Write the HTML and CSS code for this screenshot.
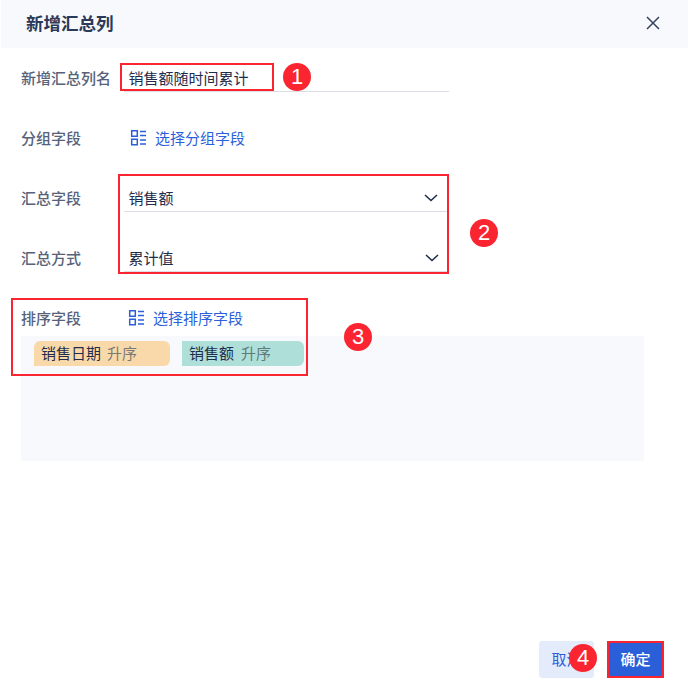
FILE: index.html
```html
<!DOCTYPE html>
<html lang="zh-CN">
<head>
    <meta charset="UTF-8">
    <title>新增汇总列</title>
    <link rel="stylesheet" href="styles.css">
</head>
<body>
    <div class="dialog">
        <div class="dialog-header">
            <h1 class="dialog-title">新增汇总列</h1>
            <svg class="close-icon" width="14" height="14" viewBox="0 0 14 14">
                <path d="M1 1L13 13M13 1L1 13" />
            </svg>
        </div>

        <div class="dialog-body">
            <div class="form-row">
                <label class="form-label">新增汇总列名</label>
                <div class="field">销售额随时间累计</div>
            </div>

            <div class="form-row">
                <label class="form-label">分组字段</label>
                <a class="pick-link">
                    <svg class="pick-icon" width="17" height="17" viewBox="0 0 17 17">
                        <path d="M1.7 1.7H7.3V7.3H1.7ZM1.7 10.2H7.3V15.8H1.7ZM10 2.5H16M10 6.5H16M10 11H16M10 15H16" />
                    </svg>
                    选择分组字段
                </a>
            </div>

            <div class="form-row">
                <label class="form-label">汇总字段</label>
                <div class="field field-select">
                    销售额
                    <svg class="arrow" width="14" height="8" viewBox="0 0 14 8">
                        <path d="M1 1L7 6.5L13 1" />
                    </svg>
                </div>
            </div>

            <div class="form-row">
                <label class="form-label">汇总方式</label>
                <div class="field field-select field-select-last">
                    累计值
                    <svg class="arrow" width="14" height="8" viewBox="0 0 14 8">
                        <path d="M1 1L7 6.5L13 1" />
                    </svg>
                </div>
            </div>

            <div class="form-row form-row-sort">
                <label class="form-label">排序字段</label>
                <a class="pick-link pick-link-sort">
                    <svg class="pick-icon" width="17" height="17" viewBox="0 0 17 17">
                        <path d="M1.7 1.7H7.3V7.3H1.7ZM1.7 10.2H7.3V15.8H1.7ZM10 2.5H16M10 6.5H16M10 11H16M10 15H16" />
                    </svg>
                    选择排序字段
                </a>
            </div>

            <div class="sort-panel">
                <span class="tag tag-orange">销售日期<em>升序</em></span>
                <span class="tag tag-green">销售额<em>升序</em></span>
            </div>
        </div>

        <div class="dialog-footer">
            <button class="btn btn-cancel">取消</button>
            <button class="btn btn-primary">确定</button>
        </div>
    </div>

    <!-- red annotations on top of the screenshot -->
    <div class="mark mark-1"></div>
    <div class="mark mark-2"></div>
    <div class="mark mark-3"></div>
    <div class="mark mark-4"></div>
    <div class="badge badge-1">1</div>
    <div class="badge badge-2">2</div>
    <div class="badge badge-3">3</div>
    <div class="badge badge-4">4</div>
</body>
</html>
```

FILE: styles.css
```css
body {
    margin: 0;
    font-family: "Noto Sans CJK SC", "Liberation Sans", sans-serif;
    font-size: 15px;
    color: #1f2d4a;
    background-color: #fff;
}
.dialog {
    display: flex;
    flex-direction: column;
    height: 683px;
}
.dialog-header {
    display: flex;
    align-items: center;
    justify-content: space-between;
    box-sizing: border-box;
    height: 48px;
    margin-left: 1px;
    padding: 0 28px 3px 25px;
    background-color: #f8f9fd;
}
.dialog-title {
    margin: 0;
    font-size: 17.5px;
    font-weight: 700;
    color: #2a3a58;
}
.close-icon path {
    fill: none;
    stroke: #34435f;
    stroke-width: 1.5;
}
.dialog-body {
    flex: 1;
    padding: 12px 44px 0 21px;
}
.form-row {
    display: flex;
    height: 36px;
    margin-bottom: 24px;
}
.form-row-sort {
    margin-bottom: 0;
}
.form-label {
    width: 103px;
    line-height: 36px;
    font-weight: 500;
    color: #566279;
    white-space: nowrap;
}
.field {
    display: flex;
    align-items: center;
    justify-content: space-between;
    box-sizing: border-box;
    width: 325px;
    height: 32px;
    padding: 4px 11px 0 4.5px;
    border-bottom: 1px solid #dcdee6;
}
.field-select-last {
    padding-right: 10px;
}
.arrow path {
    fill: none;
    stroke: #1f2d4a;
    stroke-width: 1.6;
}
.pick-link {
    display: flex;
    align-items: center;
    gap: 8px;
    box-sizing: border-box;
    height: 36px;
    margin-left: 6px;
    padding-bottom: 2px;
    color: #2b5fd9;
}
.pick-link-sort {
    margin-left: 4px;
}
.pick-icon path {
    fill: none;
    stroke: #2b5fd9;
    stroke-width: 1.5;
}
.sort-panel {
    display: flex;
    gap: 12px;
    height: 120px;
    padding: 5px 13px 0;
    background-color: #f8f9fd;
}
.tag {
    display: flex;
    align-items: center;
    box-sizing: border-box;
    height: 25px;
    padding: 0 7px 2px;
    color: #1f2d4a;
}
.tag em {
    margin-left: 6px;
    font-style: normal;
    color: #7a7a74;
}
.tag-orange {
    width: 136px;
    border-radius: 6px 6px 6px 0;
    background-color: #f9d9a9;
}
.tag-green {
    width: 122px;
    border-radius: 0 6px 6px 0;
    background-color: #afdfd9;
}
.tag-green em {
    margin-left: 7px;
    color: #5f7a78;
}
.dialog-footer {
    display: flex;
    justify-content: flex-end;
    gap: 15px;
    padding: 0 26px 5px 0;
}
.btn {
    height: 37px;
    border: 0;
    border-radius: 3px;
    font-family: inherit;
    font-size: 15px;
    padding: 0 0 3px;
}
.btn-cancel {
    width: 55px;
    color: #2b5fd9;
    background-color: #e4ecfc;
}
.btn-primary {
    width: 53px;
    font-weight: 500;
    color: #fff;
    background-color: #2b5fd9;
}
.mark {
    position: absolute;
    box-sizing: border-box;
    border: 2px solid #fa2530;
}
.mark-1 { left: 120px; top: 63px; width: 154px; height: 28px; }
.mark-2 { left: 118px; top: 174px; width: 331px; height: 100px; }
.mark-3 { left: 11px; top: 298px; width: 297px; height: 78px; }
.mark-4 { left: 607px; top: 641px; width: 57px; height: 37px; }
.badge {
    position: absolute;
    width: 28px;
    height: 28px;
    border-radius: 50%;
    background-color: #fa2530;
    color: #fff;
    font-family: "Liberation Sans", sans-serif;
    font-size: 22px;
    line-height: 28px;
    text-align: center;
}
.badge-1 { left: 283px; top: 63px; }
.badge-2 { left: 470px; top: 219px; }
.badge-3 { left: 344px; top: 323px; }
.badge-4 { left: 569px; top: 644px; }
```
